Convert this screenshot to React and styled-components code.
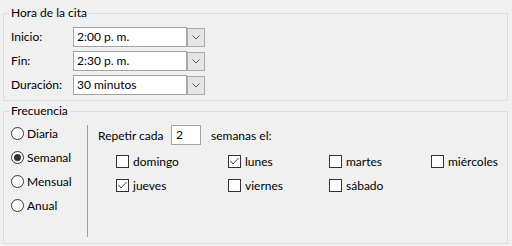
import React from 'react';
import styled, { createGlobalStyle } from 'styled-components';

const GlobalStyle = createGlobalStyle`
  html, body {
    margin: 0;
    background: #f0f0f0;
  }
  body {
    width: 512px;
    height: 246px;
    overflow: hidden;
    font-family: "Segoe UI", Lato, "Noto Sans", sans-serif;
    font-size: 12px;
    color: #000;
  }
`;

const Page = styled.div`
  display: flex;
  flex-direction: column;
  gap: 2px;
  padding: 5px 0 0 3px;
`;

const Group = styled.fieldset`
  box-sizing: border-box;
  width: 505px;
  margin: 0;
  min-inline-size: 0;
  border: 1px solid #dcdcdc;
  padding: ${(p) => p.$pad};
`;

const Legend = styled.legend`
  padding: 0 2px;
  margin-left: -2px;
  line-height: 16px;
`;

const TimeGrid = styled.div`
  display: grid;
  grid-template-columns: 62px auto;
  row-gap: 4px;
  align-items: center;
  justify-content: start;
`;

const Label = styled.span`
  line-height: 16px;
  white-space: nowrap;
`;

const Combo = styled.div`
  display: flex;
  align-items: flex-start;
  height: 20px;
`;

const ComboField = styled.div`
  box-sizing: border-box;
  width: 114px;
  height: 20px;
  background: #fff;
  border: 1px solid #a3a3a3;
  padding: 0 3px;
  line-height: 18px;
`;

const ComboButton = styled.div`
  box-sizing: border-box;
  width: 18px;
  height: 19px;
  margin-top: 1px;
  background: #e5e5e5;
  border: 1px solid #adadad;
  display: flex;
  align-items: center;
  justify-content: center;
`;

const FreqBody = styled.div`
  display: flex;
  height: 112px;
`;

const RadioColumn = styled.div`
  width: 76px;
  display: flex;
  flex-direction: column;
  gap: 8px;
`;

const Option = styled.div`
  display: flex;
  align-items: center;
  height: 16px;
  gap: ${(p) => p.$gap || '3px'};
  white-space: nowrap;
`;

const RadioCircle = styled.span`
  box-sizing: border-box;
  width: 13px;
  height: 13px;
  border-radius: 50%;
  border: 1px solid #333;
  background: #fff;
  display: flex;
  align-items: center;
  justify-content: center;
  &::after {
    content: '';
    width: 7px;
    height: 7px;
    border-radius: 50%;
    background: ${(p) => (p.$on ? '#333' : 'transparent')};
  }
`;

const Separator = styled.div`
  width: 1px;
  background: #a0a0a0;
`;

const WeekPanel = styled.div`
  margin-left: 10px;
  display: flex;
  flex-direction: column;
`;

const RepeatRow = styled.div`
  display: flex;
  align-items: center;
  height: 20px;
`;

const RepeatLabel = styled.span`
  width: 73px;
  white-space: nowrap;
`;

const NumberField = styled.div`
  box-sizing: border-box;
  width: 30px;
  height: 20px;
  background: #fff;
  border: 1px solid #a3a3a3;
  padding: 0 4px;
  line-height: 18px;
`;

const After = styled.span`
  margin-left: 10px;
  white-space: nowrap;
`;

const DayGrid = styled.div`
  display: grid;
  grid-template-columns: 112px 101px 102px auto;
  row-gap: 8px;
  margin-top: 8px;
  padding-left: 18px;
`;

const Box = styled.span`
  box-sizing: border-box;
  width: 13px;
  height: 13px;
  border: 1px solid #333;
  background: #fff;
  display: flex;
`;

const Chevron = () => (
  <svg width="8" height="5" viewBox="0 0 8 5">
    <path d="M0.5 0.5 L4 4 L7.5 0.5" fill="none" stroke="#606060" strokeWidth="1" />
  </svg>
);

const Check = () => (
  <svg width="11" height="11" viewBox="0 0 11 11">
    <path d="M1.5 5 L4 8 L9.5 2" fill="none" stroke="#444" strokeWidth="1" />
  </svg>
);

const times = [
  ['Inicio:', '2:00 p. m.'],
  ['Fin:', '2:30 p. m.'],
  ['Duración:', '30 minutos'],
];

const kinds = [
  ['Diaria', false],
  ['Semanal', true],
  ['Mensual', false],
  ['Anual', false],
];

const days = [
  ['domingo', false],
  ['lunes', true],
  ['martes', false],
  ['miércoles', false],
  ['jueves', true],
  ['viernes', false],
  ['sábado', false],
];

const App = () => {
  return (
    <>
      <GlobalStyle />
      <Page>
        <Group $pad="6px 7px 5px 7px">
          <Legend>Hora de la cita</Legend>
          <TimeGrid>
            {times.map(([label, value]) => (
              <React.Fragment key={label}>
                <Label>{label}</Label>
                <Combo>
                  <ComboField>{value}</ComboField>
                  <ComboButton>
                    <Chevron />
                  </ComboButton>
                </Combo>
              </React.Fragment>
            ))}
          </TimeGrid>
        </Group>
        <Group $pad="6px 7px 6px 7px">
          <Legend>Frecuencia</Legend>
          <FreqBody>
            <RadioColumn>
              {kinds.map(([name, on]) => (
                <Option key={name}>
                  <RadioCircle $on={on} />
                  {name}
                </Option>
              ))}
            </RadioColumn>
            <Separator />
            <WeekPanel>
              <RepeatRow>
                <RepeatLabel>Repetir cada</RepeatLabel>
                <NumberField>2</NumberField>
                <After>semanas el:</After>
              </RepeatRow>
              <DayGrid>
                {days.map(([name, on]) => (
                  <Option key={name} $gap="4px">
                    <Box>{on && <Check />}</Box>
                    {name}
                  </Option>
                ))}
              </DayGrid>
            </WeekPanel>
          </FreqBody>
        </Group>
      </Page>
    </>
  );
};

export default App;
